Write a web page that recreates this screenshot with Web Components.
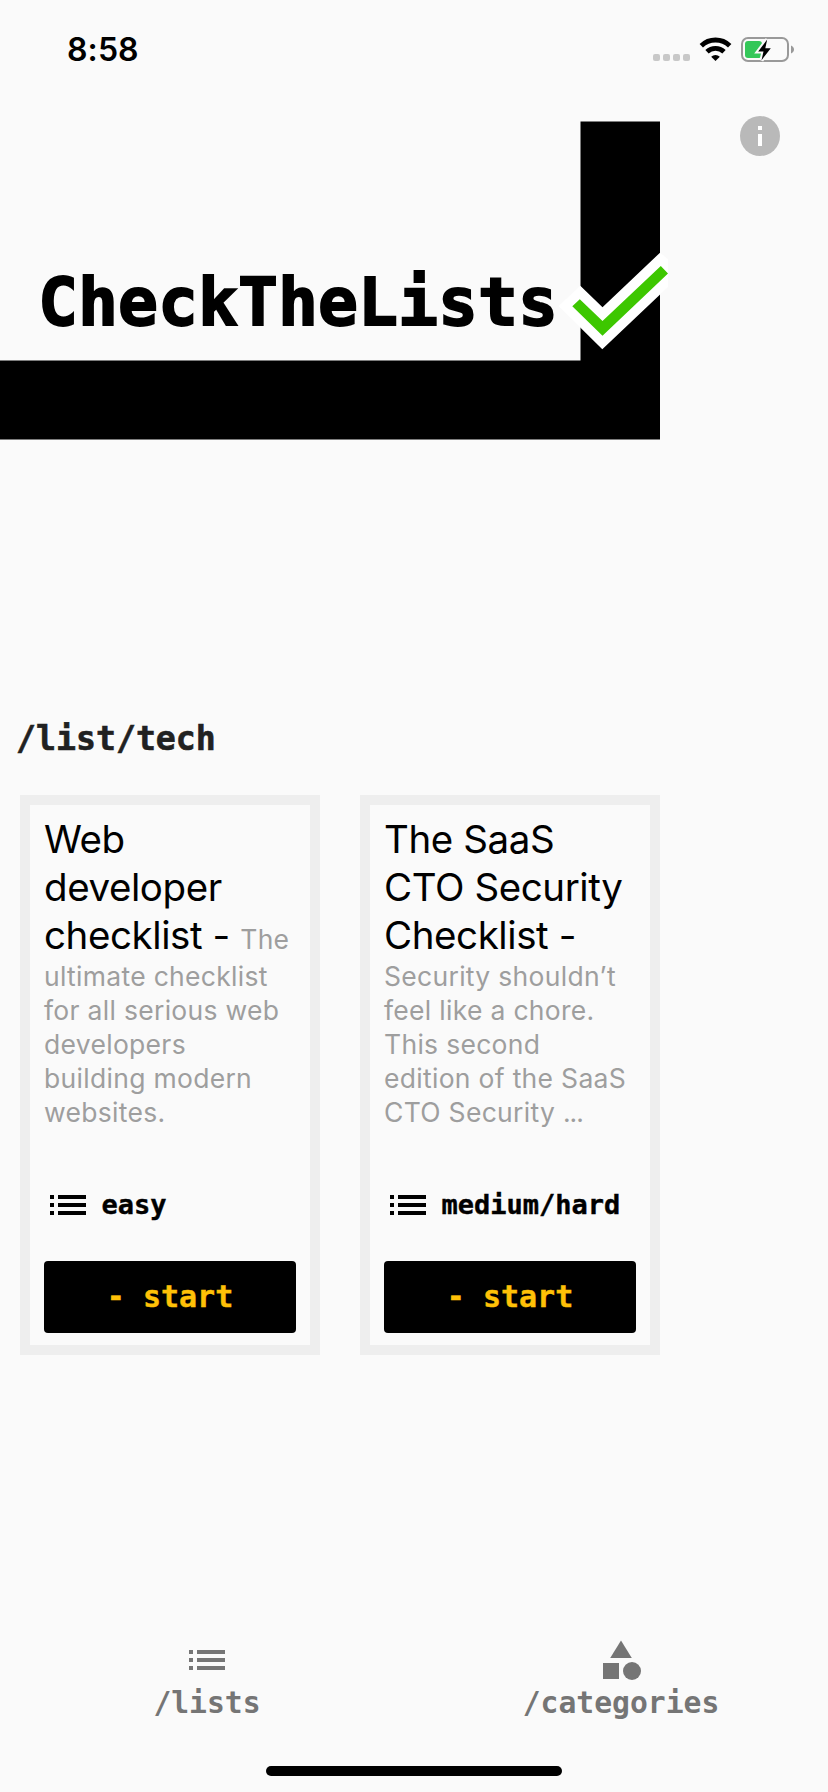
<!DOCTYPE html>
<html lang="en">
<head>
<meta charset="utf-8">
<title>CheckTheLists</title>
<style>
html,body{margin:0;padding:0}
body{width:828px;height:1792px;overflow:hidden;background:#fafafa}
</style>
</head>
<body>
<app-screen>
  <status-bar slot="status" time="8:58"></status-bar>
  <brand-hero slot="hero">CheckTheLists</brand-hero>
  <list-section slot="main" heading="/list/tech">
    <check-card>
      <span slot="title">Web<br>developer<br>checklist - </span>
      <span slot="text">The<br>ultimate checklist<br>for all serious web<br>developers<br>building modern<br>websites.</span>
      <span slot="level">easy</span>
    </check-card>
    <check-card>
      <span slot="title">The SaaS<br>CTO Security<br>Checklist -<br></span>
      <span slot="text">Security shouldn’t<br>feel like a chore.<br>This second<br>edition of the SaaS<br>CTO Security <span style="letter-spacing:-1px">...</span></span>
      <span slot="level">medium/hard</span>
    </check-card>
  </list-section>
  <tab-item slot="tabs" icon="list">/lists</tab-item>
  <tab-item slot="tabs" icon="shapes">/categories</tab-item>
</app-screen>
<script>
const MONO = '"DejaVu Sans Mono", monospace';
const define = (name, html) => customElements.define(name, class extends HTMLElement {
  connectedCallback() {
    if (this.shadowRoot) return;
    const root = this.attachShadow({ mode: 'open' });
    root.innerHTML = typeof html === 'function' ? html(this) : html;
  }
});

const icons = {
  list: '<svg width="48" height="48" viewBox="0 0 24 24" fill="currentColor"><path d="M3 13h2v-2H3v2zm0 4h2v-2H3v2zm0-8h2V7H3v2zm4 4h14v-2H7v2zm0 4h14v-2H7v2zM7 7v2h14V7H7z"/></svg>',
  shapes: '<svg width="48" height="48" viewBox="0 0 24 24" fill="currentColor"><path d="M12 2.200l-5.400 8.800h10.800z"/><circle cx="17.5" cy="17.5" r="4.5"/><path d="M3 13.5h8v8H3z"/></svg>'
};

define('app-icon', el => `<style>:host{display:block;width:48px;height:48px}svg{display:block}</style>${icons[el.getAttribute('name')]}`);

define('app-screen', `<style>
:host{display:flex;flex-direction:column;width:828px;height:1792px;background:#fafafa;font-family:Inter,sans-serif}
nav{display:grid;grid-template-columns:1fr 1fr;height:130px;margin-top:auto}
.home{width:296px;height:10px;border-radius:5px;background:#000;margin:0 auto 16px}
</style><slot name="status"></slot><slot name="hero"></slot><slot name="main"></slot>
<nav><slot name="tabs"></slot></nav><div class="home"></div>`);

define('status-bar', el => `<style>
:host{display:flex;box-sizing:border-box;height:100px;padding:31px 0 0 67px}
.time{font:600 32px/38px Inter,sans-serif;letter-spacing:.1px;color:#000}
svg{display:block;margin-left:auto;margin-top:-1px}
</style><span class="time">${el.getAttribute('time')}</span>
<svg width="183" height="40" viewBox="645 30 183 40">
<g fill="#c8c8c8"><rect x="653" y="54" width="7" height="7" rx="2"/><rect x="663" y="54" width="7" height="7" rx="2"/><rect x="673" y="54" width="7" height="7" rx="2"/><rect x="683" y="54" width="7" height="7" rx="2"/></g>
<g fill="none" stroke="#000" stroke-width="4.8"><path d="M701.3 45.8a20.3 20.3 0 0 1 28.4 0"/><path d="M707 51.7a12.3 12.3 0 0 1 17 0"/></g>
<path d="M715.5 61l-4.300-4.300a6.300 6.300 0 0 1 8.600 0z"/>
<rect x="742" y="38" width="46" height="23" rx="6" fill="none" stroke="#999" stroke-width="2"/>
<path d="M791 45.500c4 1.500 4 6.500 0 8z" fill="#999"/>
<rect x="745" y="41" width="17" height="17" rx="3" fill="#34c759"/>
<path d="M767.200 39.500l-9 12h5.300l-2 8.700 9.300-12h-5.500z" fill="#000" stroke="#fafafa" stroke-width="4" paint-order="stroke"/>
</svg>`);

define('brand-hero', `<style>
:host{display:grid;width:828px;height:620px}
svg,h1{grid-area:1/1}
svg{display:block}
h1{margin:166.500px 0 0 38px;font:bold 66.450px/70px ${MONO};color:#000;height:70px;-webkit-text-stroke:1.800px #000}
</style>
<svg width="828" height="350" viewBox="0 100 828 350">
<path d="M0 360.500h580.500V121.500H660V439.500H0z"/>
<path d="M558.500 306L580.300 285.700l22.200 21.500 57.500-54.500 8 6.200V287l-65.700 62.300z" fill="#fff"/>
<path d="M572.300 306.300l7.500-7 22.700 21.700 58.300-55 7.200 7.500-65.500 62.200z" fill="#3dc700"/>
<circle cx="760" cy="136" r="20" fill="#b9b9b9"/>
<path d="M758 126h4v4h-4zM758 134h4v12h-4z" fill="#fff"/>
</svg>
<h1><slot></slot></h1>`);

define('list-section', el => `<style>
:host{display:block}
h2{margin:0 0 0 16px;height:75px;font:bold 33.200px/37px ${MONO};color:#212121;-webkit-text-stroke:.6px #212121}
.row{display:flex;gap:40px;padding-left:20px}
</style><h2>${el.getAttribute('heading')}</h2><div class="row"><slot></slot></div>`);

define('check-card', `<style>
:host{display:flex;flex-direction:column;box-sizing:border-box;width:300px;height:560px;border:10px solid #eee;padding:10px 14px 12px}
.copy{height:368px;font:400 26.500px/34px Inter,sans-serif;letter-spacing:.3px;color:#9e9e9e;white-space:pre-line;margin-right:-14px}
slot[name=title]{font-size:38.500px;line-height:48px;letter-spacing:-.42px;font-weight:420;color:#000}
.level{display:flex;align-items:center;gap:9.500px;height:48px;font:bold 27px/32px ${MONO};color:#000;margin-top:-2px;-webkit-text-stroke:.4px #000}
button{height:72px;margin-top:auto;border:0;border-radius:4px;background:#000;color:#ffc107;font:bold 30px/36px ${MONO};padding:0;-webkit-text-stroke:.4px #ffc107}
</style><div class="copy"><slot name="title"></slot><slot name="text"></slot></div>
<div class="level"><app-icon name="list"></app-icon><slot name="level"></slot></div>
<button>- start</button>`);

define('tab-item', el => `<style>
:host{display:flex;flex-direction:column;align-items:center;font:bold 29.700px/36px ${MONO};color:#757575}
app-icon{margin-bottom:1px}
</style><app-icon name="${el.getAttribute('icon')}"></app-icon><span><slot></slot></span>`);
</script>
</body>
</html>
